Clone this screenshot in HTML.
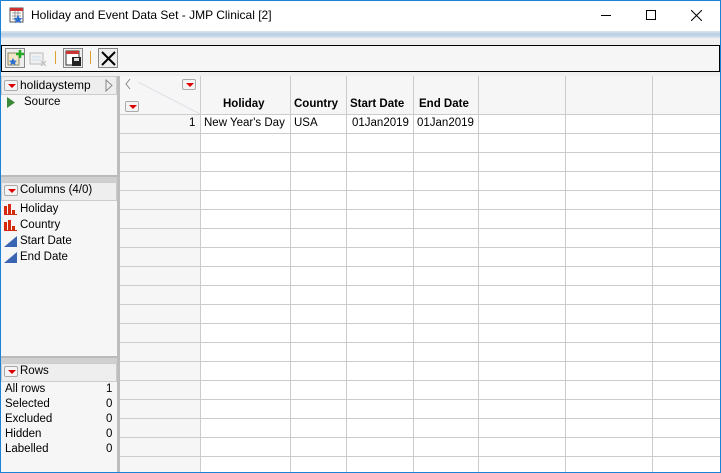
<!DOCTYPE html>
<html><head><style>
*{margin:0;padding:0;box-sizing:border-box}
body{width:721px;height:473px;position:relative;overflow:hidden;font-family:"Liberation Sans",sans-serif;font-size:11.5px;color:#000;background:#fff}
.a{position:absolute}
.dd{position:absolute;width:14px;height:11px;border:1px solid #aaa;background:#f4f4f4;border-radius:2px}
.dd:after{content:"";position:absolute;left:3px;top:3px;border-left:4px solid transparent;border-right:4px solid transparent;border-top:4px solid #d00}
.vl{position:absolute;top:76px;width:1px;height:396px;background:#ccc}
.hl{position:absolute;left:120px;width:600px;height:1px;background:#ccc}
.t{position:absolute;white-space:nowrap}
</style></head><body>
<div class="a" style="left:0;top:0;width:721px;height:473px;border:1px solid #1883d7"></div>
<svg class="a" style="left:9px;top:7px" width="16" height="16"><rect x="1" y="1" width="13" height="14" fill="#fff" stroke="#555"/><rect x="1" y="1" width="13" height="3" fill="#c33"/><path d="M3 6h9M3 9h9M3 12h9M6 4v11M9 4v11" stroke="#999"/><path d="M9 8l1.5 3 3 .3-2.3 2 .7 3-2.9-1.6-2.9 1.6.7-3-2.3-2 3-.3z" fill="#2a6fd0"/></svg>
<div class="t" style="left:31px;top:8px;font-size:12px">Holiday and Event Data Set - JMP Clinical [2]</div>
<div class="a" style="left:601px;top:15px;width:10px;height:1px;background:#000"></div>
<div class="a" style="left:646px;top:10px;width:10px;height:10px;border:1px solid #000"></div>
<svg class="a" style="left:691px;top:10px" width="11" height="11"><path d="M0 0L11 11M11 0L0 11" stroke="#000"/></svg>
<div class="a" style="left:1px;top:31px;width:719px;height:7px;background:linear-gradient(#dbe6f1,#b9cde2 50%,#dbe6f1)"></div>
<div class="a" style="left:1px;top:38px;width:719px;height:38px;background:#f0f0f0"></div>
<div class="a" style="left:1px;top:45px;width:719px;height:27px;border:1px solid #000;background:#f6f6f6"></div>
<div class="a" style="left:5px;top:48px;width:20px;height:20px;border:1px solid #888;background:#eee"></div>
<svg class="a" style="left:6px;top:49px" width="19" height="19"><rect x="2" y="4" width="11" height="12" fill="#f3e6c8" stroke="#886"/><path d="M7 9l1.3 2.5 2.7.3-2 1.8.6 2.6-2.6-1.4-2.6 1.4.6-2.6-2-1.8 2.7-.3z" fill="#2a6fd0"/><path d="M14 1v8M10 5h8" stroke="#2a2" stroke-width="2.5"/></svg>
<svg class="a" style="left:28px;top:49px" width="20" height="19"><rect x="2" y="4" width="13" height="11" fill="#f0f0f0" stroke="#bbb"/><path d="M4 8h9M4 11h9" stroke="#cde"/><path d="M13 12l5 5M18 12l-5 5" stroke="#bbb"/></svg>
<div class="a" style="left:55px;top:51px;width:1px;height:13px;background:#e0a030"></div>
<div class="a" style="left:63px;top:48px;width:20px;height:20px;border:1px solid #888;background:#eee"></div>
<svg class="a" style="left:64px;top:49px" width="19" height="19"><rect x="2" y="2" width="13" height="14" fill="#fff" stroke="#333"/><rect x="2" y="2" width="13" height="3" fill="#c33"/><rect x="8" y="8" width="9" height="9" fill="#222"/><rect x="10" y="9" width="5" height="3" fill="#ddd"/></svg>
<div class="a" style="left:90px;top:51px;width:1px;height:13px;background:#e0a030"></div>
<div class="a" style="left:98px;top:48px;width:20px;height:20px;border:1px solid #888;background:#eee"></div>
<svg class="a" style="left:99px;top:49px" width="19" height="19"><path d="M3 3L16 16M16 3L3 16" stroke="#000" stroke-width="2"/></svg>
<div class="a" style="left:1px;top:76px;width:116px;height:396px;background:#f6f6f6"></div>
<div class="a" style="left:117px;top:76px;width:3px;height:396px;background:#bdbdbd"></div>
<div class="a" style="left:1px;top:76px;width:116px;height:19px;border:1px solid #ccc;background:#eee"></div>
<div class="dd" style="left:4px;top:80px"></div>
<div class="t" style="left:20px;top:78px;font-size:12px">holidaystemp</div>
<svg class="a" style="left:105px;top:79px" width="8" height="13"><path d="M1 1l6 5.5L1 12z" fill="none" stroke="#888"/></svg>
<svg class="a" style="left:7px;top:97px" width="8" height="11"><path d="M0 0l8 5.5L0 11z" fill="#3a8a3a"/></svg>
<div class="t" style="left:24px;top:96px">Source</div>
<div class="a" style="left:1px;top:175px;width:116px;height:7px;background:#d0d0d0;border-top:2px solid #bbb"></div>
<div class="a" style="left:1px;top:182px;width:116px;height:19px;border:1px solid #ccc;background:#eee"></div>
<div class="dd" style="left:4px;top:185px"></div>
<div class="t" style="left:20px;top:184px">Columns (4/0)</div>
<svg class="a" style="left:4px;top:204px" width="13" height="11"><path d="M0 11V2h3v9zM4 11V0h3v11zM8 11V6h3v5z" fill="#d52a0e"/><rect x="0" y="10" width="13" height="1" fill="#d52a0e"/></svg>
<div class="t" style="left:20px;top:203px">Holiday</div>
<svg class="a" style="left:4px;top:220px" width="13" height="11"><path d="M0 11V2h3v9zM4 11V0h3v11zM8 11V6h3v5z" fill="#d52a0e"/><rect x="0" y="10" width="13" height="1" fill="#d52a0e"/></svg>
<div class="t" style="left:20px;top:219px">Country</div>
<svg class="a" style="left:4px;top:236px" width="13" height="11"><path d="M0 11L13 0V11z" fill="#3a64b4"/></svg>
<div class="t" style="left:20px;top:235px">Start Date</div>
<svg class="a" style="left:4px;top:252px" width="13" height="11"><path d="M0 11L13 0V11z" fill="#3a64b4"/></svg>
<div class="t" style="left:20px;top:251px">End Date</div>
<div class="a" style="left:1px;top:356px;width:116px;height:7px;background:#d0d0d0;border-top:2px solid #bbb"></div>
<div class="a" style="left:1px;top:363px;width:116px;height:19px;border:1px solid #ccc;background:#eee"></div>
<div class="dd" style="left:4px;top:366px"></div>
<div class="t" style="left:20px;top:365px">Rows</div>
<div class="t" style="left:5px;top:383px">All rows</div><div class="t" style="left:106px;top:383px">1</div>
<div class="t" style="left:5px;top:398px">Selected</div><div class="t" style="left:106px;top:398px">0</div>
<div class="t" style="left:5px;top:413px">Excluded</div><div class="t" style="left:106px;top:413px">0</div>
<div class="t" style="left:5px;top:428px">Hidden</div><div class="t" style="left:106px;top:428px">0</div>
<div class="t" style="left:5px;top:443px">Labelled</div><div class="t" style="left:106px;top:443px">0</div>
<div class="a" style="left:120px;top:76px;width:80px;height:396px;background:#f6f6f6"></div>
<div class="a" style="left:200px;top:76px;width:520px;height:38px;background:#f6f6f6"></div>
<svg class="a" style="left:120px;top:76px" width="80" height="38"><path d="M18 6L80 38" stroke="#e0e0e8"/><path d="M10 3L6 8l4 5" fill="none" stroke="#888"/></svg>
<div class="dd" style="left:182px;top:79px"></div>
<div class="dd" style="left:125px;top:101px"></div>
<div class="vl" style="left:200px"></div><div class="vl" style="left:290px"></div><div class="vl" style="left:346px"></div><div class="vl" style="left:413px"></div><div class="vl" style="left:478px"></div><div class="vl" style="left:565px"></div><div class="vl" style="left:652px"></div>
<div class="hl" style="top:114px"></div><div class="hl" style="top:133px"></div><div class="hl" style="top:152px"></div><div class="hl" style="top:171px"></div><div class="hl" style="top:190px"></div><div class="hl" style="top:209px"></div><div class="hl" style="top:228px"></div><div class="hl" style="top:247px"></div><div class="hl" style="top:266px"></div><div class="hl" style="top:285px"></div><div class="hl" style="top:304px"></div><div class="hl" style="top:323px"></div><div class="hl" style="top:342px"></div><div class="hl" style="top:361px"></div><div class="hl" style="top:380px"></div><div class="hl" style="top:399px"></div><div class="hl" style="top:418px"></div><div class="hl" style="top:437px"></div><div class="hl" style="top:456px"></div>
<div class="t" style="left:223px;top:98px;font-weight:bold">Holiday</div>
<div class="t" style="left:294px;top:98px;font-weight:bold">Country</div>
<div class="t" style="left:350px;top:98px;font-weight:bold">Start Date</div>
<div class="t" style="left:419px;top:98px;font-weight:bold">End Date</div>
<div class="t" style="left:189px;top:117px">1</div>
<div class="t" style="left:204px;top:117px">New Year's Day</div>
<div class="t" style="left:294px;top:117px">USA</div>
<div class="t" style="left:352px;top:117px">01Jan2019</div>
<div class="t" style="left:417px;top:117px">01Jan2019</div>
</body></html>
